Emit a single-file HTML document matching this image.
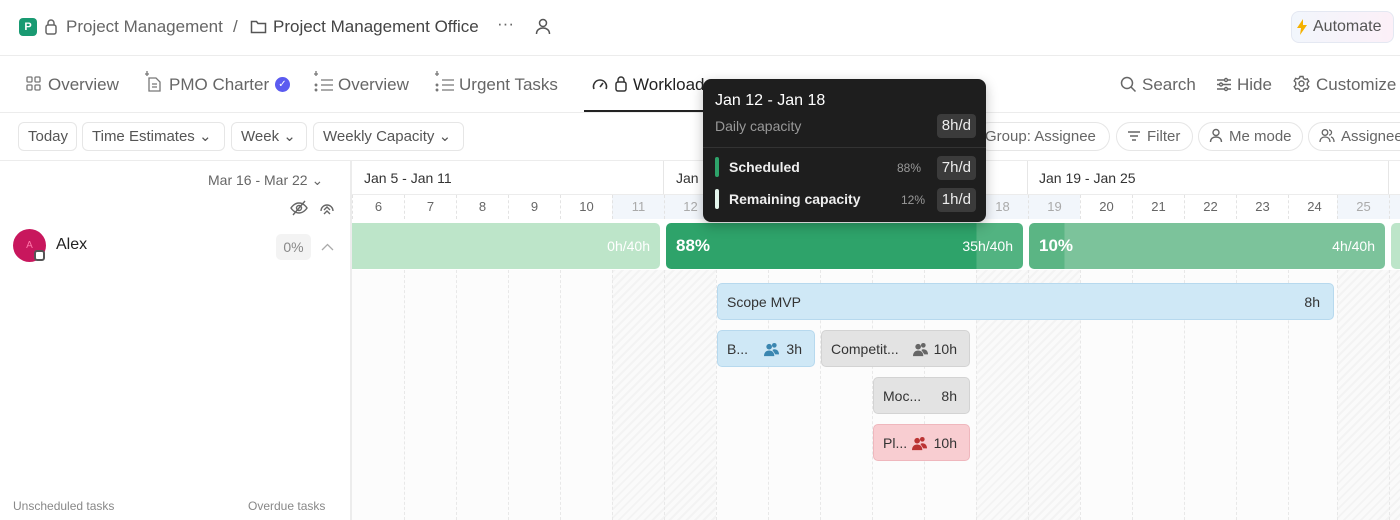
<!DOCTYPE html>
<html><head><meta charset="utf-8"><style>
*{box-sizing:border-box;margin:0;padding:0}
body{width:1400px;height:520px;overflow:hidden;background:#fff;font-family:"Liberation Sans",sans-serif;color:#333;position:relative}
.a{position:absolute;white-space:nowrap}
.g{color:#666}
.btn{position:absolute;top:122px;height:29px;border:1px solid #e6e6e6;border-radius:6px;font-size:15px;color:#555;padding:0 9px;line-height:27px}
.pill{position:absolute;top:122px;height:29px;border:1px solid #e6e6e6;border-radius:15px;font-size:15px;color:#666;padding:0 10px;line-height:27px}
.day{position:absolute;top:195px;height:24px;width:52px;text-align:center;font-size:13px;color:#666;line-height:24px;border-left:1px dashed #e3e3e3}
.we{background:#f2f6fb;color:#aaa}
.col{position:absolute;top:270px;bottom:0;width:52px;border-left:1px dashed #e8e8e8}
.hatch{background:repeating-linear-gradient(135deg,#f3f3f3 0 2px,#fafafa 2px 6px)}
.task{position:absolute;height:37px;border-radius:5px;font-size:14px;line-height:37px;padding:0 9px;color:#333}
.tk{display:inline-block;background:#3b3b3b;border-radius:4px;padding:0 5px;height:24px;line-height:24px;color:#eee;font-size:15px}
.ppl{position:absolute;top:11px}
</style></head><body>
<svg width="0" height="0" style="position:absolute"><defs><symbol id="pp" viewBox="0 0 16 16"><circle cx="5.5" cy="5" r="3"/><path d="M0 15c0-4 2.5-6 5.5-6s5.5 2 5.5 6z"/><circle cx="11" cy="3.5" r="2.5"/><path d="M9 8.5c1-.7 1.5-.8 2-.8 3 0 5 2 5 5.5h-4z"/></symbol></defs></svg>
<!-- top bar -->
<div class="a" style="left:19px;top:18px;width:18px;height:18px;background:#199a72;border-radius:4px;color:#fff;font-size:11px;font-weight:bold;text-align:center;line-height:18px">P</div>
<svg class="a" style="left:44px;top:18px" width="14" height="18" viewBox="0 0 14 18"><rect x="2" y="7" width="10" height="9" rx="2" fill="none" stroke="#666" stroke-width="1.5"/><path d="M4 7V5a3 3 0 0 1 6 0v2" fill="none" stroke="#666" stroke-width="1.5"/></svg>
<div class="a g" style="left:66px;top:17px;font-size:17px">Project Management</div>
<div class="a g" style="left:233px;top:17px;font-size:17px">/</div>
<svg class="a" style="left:250px;top:19px" width="17" height="15" viewBox="0 0 17 15"><path d="M1.5 2.5h5l1.5 2h7.5v9h-14z" fill="none" stroke="#555" stroke-width="1.5"/></svg>
<div class="a" style="left:273px;top:17px;font-size:17px;color:#444">Project Management Office</div>
<div class="a g" style="left:497px;top:14px;font-size:17px">···</div>
<svg class="a" style="left:535px;top:18px" width="16" height="17" viewBox="0 0 16 17"><circle cx="8" cy="5" r="3.5" fill="none" stroke="#555" stroke-width="1.5"/><path d="M1.5 16c0-4 3-6 6.5-6s6.5 2 6.5 6" fill="none" stroke="#555" stroke-width="1.5"/></svg>
<div class="a" style="left:1291px;top:11px;width:103px;height:32px;border:1px solid #e4e8f2;border-radius:8px;background:linear-gradient(90deg,#f2f6fc,#fcf0f8);font-size:16px;color:#555;line-height:30px;padding-left:21px">Automate</div>
<svg class="a" style="left:1297px;top:19px" width="10" height="16" viewBox="0 0 10 16"><path d="M6 0L0 9h4l-1 7 7-10H6z" fill="#f5b100"/></svg>
<div class="a" style="left:0;top:55px;width:1400px;height:1px;background:#ececec"></div>
<!-- tabs -->
<svg class="a" style="left:26px;top:76px" width="15" height="15" viewBox="0 0 15 15" fill="none" stroke="#777" stroke-width="1.3"><rect x="1" y="1" width="5" height="5" rx="1"/><rect x="9" y="1" width="5" height="5" rx="1"/><rect x="1" y="9" width="5" height="5" rx="1"/><rect x="9" y="9" width="5" height="5" rx="1"/></svg>
<div class="a g" style="left:48px;top:75px;font-size:17px">Overview</div>
<svg class="a" style="left:143px;top:70px" width="20" height="22" viewBox="0 0 20 22" fill="none" stroke="#777" stroke-width="1.3"><path d="M4 1v5M2 4h4" /><path d="M6 8h7l4 4v9H6z"/><path d="M9 14h5M9 17h5"/></svg>
<div class="a g" style="left:169px;top:75px;font-size:17px">PMO Charter</div>
<div class="a" style="left:275px;top:77px;width:15px;height:15px;border-radius:50%;background:#5b5bf0;color:#fff;font-size:10px;text-align:center;line-height:15px">✓</div>
<svg class="a" style="left:313px;top:70px" width="22" height="22" viewBox="0 0 22 22" fill="none" stroke="#777" stroke-width="1.3"><path d="M3 1v5M1 4h4"/><path d="M8 10h12M8 15h12M8 20h12"/><circle cx="3" cy="15" r=".8" fill="#777"/><circle cx="3" cy="20" r=".8" fill="#777"/></svg>
<div class="a g" style="left:338px;top:75px;font-size:17px">Overview</div>
<svg class="a" style="left:434px;top:70px" width="22" height="22" viewBox="0 0 22 22" fill="none" stroke="#777" stroke-width="1.3"><path d="M3 1v5M1 4h4"/><path d="M8 10h12M8 15h12M8 20h12"/><circle cx="3" cy="15" r=".8" fill="#777"/><circle cx="3" cy="20" r=".8" fill="#777"/></svg>
<div class="a g" style="left:459px;top:75px;font-size:17px">Urgent Tasks</div>
<svg class="a" style="left:592px;top:77px" width="16" height="14" viewBox="0 0 16 14"><path d="M2 12a6.5 6.5 0 1 1 12 0" fill="none" stroke="#333" stroke-width="1.6"/><path d="M8 10l3-4" stroke="#333" stroke-width="1.6"/></svg>
<svg class="a" style="left:614px;top:75px" width="14" height="18" viewBox="0 0 14 18"><rect x="2" y="7" width="10" height="9" rx="2" fill="none" stroke="#333" stroke-width="1.5"/><path d="M4 7V5a3 3 0 0 1 6 0v2" fill="none" stroke="#333" stroke-width="1.5"/></svg>
<div class="a" style="left:633px;top:75px;font-size:17px;color:#222">Workload</div>
<div class="a" style="left:584px;top:110px;width:124px;height:2px;background:#222"></div>
<svg class="a" style="left:1120px;top:76px" width="17" height="17" viewBox="0 0 17 17"><circle cx="7" cy="7" r="5.5" fill="none" stroke="#666" stroke-width="1.5"/><path d="M11 11l4.5 4.5" stroke="#666" stroke-width="1.5"/></svg>
<div class="a g" style="left:1142px;top:75px;font-size:17px">Search</div>
<svg class="a" style="left:1216px;top:77px" width="16" height="15" viewBox="0 0 16 15" fill="none" stroke="#666" stroke-width="1.4"><path d="M1 3h14M1 7.5h14M1 12h14"/><circle cx="10" cy="3" r="1.5" fill="#fff"/><circle cx="5" cy="7.5" r="1.5" fill="#fff"/><circle cx="10" cy="12" r="1.5" fill="#fff"/></svg>
<div class="a g" style="left:1237px;top:75px;font-size:17px">Hide</div>
<svg class="a" style="left:1293px;top:75px" width="17" height="17" viewBox="0 0 17 17" fill="none" stroke="#666" stroke-width="1.4"><circle cx="8.5" cy="8.5" r="2.5"/><path d="M7 1.5h3l.5 2 1.8 1 2-.7 1.5 2.6-1.5 1.4v2.4l1.5 1.4-1.5 2.6-2-.7-1.8 1-.5 2H7l-.5-2-1.8-1-2 .7-1.5-2.6 1.5-1.4V7.3L1.2 5.9l1.5-2.6 2 .7 1.8-1z"/></svg>
<div class="a g" style="left:1316px;top:75px;font-size:17px">Customize</div>
<div class="a" style="left:0;top:112px;width:1400px;height:1px;background:#ececec"></div>
<!-- toolbar -->
<div class="btn" style="left:18px;width:59px">Today</div>
<div class="btn" style="left:82px;width:143px">Time Estimates ⌄</div>
<div class="btn" style="left:231px;width:76px">Week ⌄</div>
<div class="btn" style="left:313px;width:151px">Weekly Capacity ⌄</div>
<div class="pill" style="left:975px;width:135px;border-left:none">Group: Assignee</div>
<div class="pill" style="left:1116px;width:77px;padding-left:30px">Filter</div>
<svg class="a" style="left:1127px;top:130px" width="14" height="12" viewBox="0 0 14 12" stroke="#666" stroke-width="1.4"><path d="M1 2h12M3 6h8M5 10h4"/></svg>
<div class="pill" style="left:1198px;width:105px;padding-left:30px">Me mode</div>
<svg class="a" style="left:1209px;top:128px" width="14" height="15" viewBox="0 0 14 15" fill="none" stroke="#666" stroke-width="1.4"><circle cx="7" cy="4.5" r="3"/><path d="M1.5 14c0-3.5 2.5-5 5.5-5s5.5 1.5 5.5 5"/></svg>
<div class="pill" style="left:1308px;width:120px;padding-left:32px">Assignee</div>
<svg class="a" style="left:1319px;top:128px" width="16" height="15" viewBox="0 0 16 15" fill="none" stroke="#666" stroke-width="1.3"><circle cx="6" cy="4.5" r="2.8"/><path d="M1 14c0-3.5 2.2-5 5-5s5 1.5 5 5"/><path d="M10 2a2.5 2.5 0 0 1 0 5M12 9c2 .5 3 2 3 5"/></svg>
<div class="a" style="left:0;top:160px;width:1400px;height:1px;background:#ececec"></div>
<!-- left panel -->
<div class="a g" style="left:208px;top:172px;font-size:14px">Mar 16 - Mar 22 ⌄</div>
<svg class="a" style="left:290px;top:200px" width="18" height="16" viewBox="0 0 18 16" fill="none" stroke="#666" stroke-width="1.4"><path d="M1 8s3-5 8-5 8 5 8 5-3 5-8 5-8-5-8-5z"/><circle cx="9" cy="8" r="2.5"/><path d="M3 15L15 1"/></svg>
<svg class="a" style="left:319px;top:199px" width="16" height="18" viewBox="0 0 16 18" fill="none" stroke="#666" stroke-width="1.4"><path d="M2 12a6 6 0 1 1 12 0"/><path d="M5 11l3-3 3 3M5 15l3-3 3 3"/></svg>
<div class="a" style="left:13px;top:229px;width:33px;height:33px;border-radius:50%;background:#c8175d;color:#f7a;font-size:10px;text-align:center;line-height:33px">A</div>
<div class="a" style="left:34px;top:250px;width:11px;height:11px;border-radius:3px;background:#fff;border:2px solid #555"></div>
<div class="a" style="left:56px;top:236px;font-size:16px;color:#222">Alex</div>
<div class="a" style="left:276px;top:234px;width:35px;height:26px;background:#f3f3f3;border-radius:5px;color:#888;font-size:14px;text-align:center;line-height:26px">0%</div>
<svg class="a" style="left:321px;top:243px" width="13" height="8" viewBox="0 0 13 8" fill="none" stroke="#aaa" stroke-width="1.3"><path d="M1 7l5.5-5.5L12 7"/></svg>
<div class="a" style="left:13px;top:499px;font-size:12px;color:#888">Unscheduled tasks</div>
<div class="a" style="left:248px;top:499px;font-size:12px;color:#888">Overdue tasks</div>
<div class="a" style="left:350px;top:160px;width:2px;height:360px;background:#ececec"></div>
<!-- grid -->
<div class="a" style="left:352px;top:270px;width:1048px;height:250px;background:#fcfcfc"></div>
<div class="col hatch" style="left:612px;width:104px"></div>
<div class="col hatch" style="left:976px;width:104px"></div>
<div class="col hatch" style="left:1337px;width:63px"></div>
<div class="col" style="left:404px"></div><div class="col" style="left:456px"></div><div class="col" style="left:508px"></div><div class="col" style="left:560px"></div><div class="col" style="left:664px"></div><div class="col" style="left:716px"></div><div class="col" style="left:768px"></div><div class="col" style="left:820px"></div><div class="col" style="left:872px"></div><div class="col" style="left:924px"></div><div class="col" style="left:1028px"></div><div class="col" style="left:1080px"></div><div class="col" style="left:1132px"></div><div class="col" style="left:1184px"></div><div class="col" style="left:1236px"></div><div class="col" style="left:1288px"></div><div class="col" style="left:1389px"></div>
<div class="a" style="left:352px;top:194px;width:1048px;height:1px;background:#ececec"></div>
<div class="a" style="left:663px;top:161px;width:1px;height:33px;background:#e6e6e6"></div>
<div class="a" style="left:1027px;top:161px;width:1px;height:33px;background:#e6e6e6"></div>
<div class="a" style="left:1388px;top:161px;width:1px;height:33px;background:#e6e6e6"></div>
<div class="a" style="left:364px;top:170px;font-size:14px;color:#333">Jan 5 - Jan 11</div>
<div class="a" style="left:676px;top:170px;font-size:14px;color:#333">Jan 12 - Jan 18</div>
<div class="a" style="left:1039px;top:170px;font-size:14px;color:#333">Jan 19 - Jan 25</div>
<div class="day" style="left:352px">6</div><div class="day" style="left:404px">7</div><div class="day" style="left:456px">8</div><div class="day" style="left:508px">9</div><div class="day" style="left:560px">10</div><div class="day we" style="left:612px">11</div><div class="day we" style="left:664px">12</div><div class="day" style="left:716px">13</div><div class="day" style="left:768px">14</div><div class="day" style="left:820px">15</div><div class="day" style="left:872px">16</div><div class="day" style="left:924px">17</div><div class="day we" style="left:976px">18</div><div class="day we" style="left:1028px">19</div><div class="day" style="left:1080px">20</div><div class="day" style="left:1132px">21</div><div class="day" style="left:1184px">22</div><div class="day" style="left:1236px">23</div><div class="day" style="left:1288px">24</div><div class="day we" style="left:1337px">25</div><div class="day we" style="left:1389px"></div>
<!-- capacity bars -->
<div class="a" style="left:352px;top:223px;width:308px;height:46px;background:#bde5c9;border-radius:0 5px 5px 0;color:#fff;font-size:14px;line-height:46px;text-align:right;padding-right:10px">0h/40h</div>
<div class="a" style="left:666px;top:223px;width:357px;height:46px;background:linear-gradient(90deg,#2ea36a 0 87%,#52b381 87%);border-radius:5px;color:#fff;line-height:46px"><span style="position:absolute;left:10px;font-size:17px;font-weight:bold">88%</span><span style="position:absolute;right:10px;font-size:14px">35h/40h</span></div>
<div class="a" style="left:1029px;top:223px;width:356px;height:46px;background:linear-gradient(90deg,#5bb584 0 10%,#7cc39b 10%);border-radius:5px;color:#fff;line-height:46px"><span style="position:absolute;left:10px;font-size:17px;font-weight:bold">10%</span><span style="position:absolute;right:10px;font-size:14px">4h/40h</span></div>
<div class="a" style="left:1391px;top:223px;width:20px;height:46px;background:#bde5c9;border-radius:5px"></div>
<!-- tasks -->
<div class="task" style="left:717px;top:283px;width:617px;background:#cfe8f6;border:1px solid #b7d9ee">Scope MVP<span style="position:absolute;right:13px">8h</span></div>
<div class="task" style="left:717px;top:330px;width:98px;background:#cfe8f6;border:1px solid #b7d9ee">B...<svg class="ppl" style="left:46px;fill:#3a86b0" width="15" height="15"><use href="#pp"/></svg><span style="position:absolute;right:12px">3h</span></div>
<div class="task" style="left:821px;top:330px;width:149px;background:#e3e3e3;border:1px solid #d3d3d3">Competit...<svg class="ppl" style="left:91px;fill:#666" width="15" height="15"><use href="#pp"/></svg><span style="position:absolute;right:12px">10h</span></div>
<div class="task" style="left:873px;top:377px;width:97px;background:#e3e3e3;border:1px solid #d3d3d3">Moc...<span style="position:absolute;right:12px">8h</span></div>
<div class="task" style="left:873px;top:424px;width:97px;background:#f8cdd1;border:1px solid #efb7bd">Pl...<svg class="ppl" style="left:38px;fill:#b33" width="15" height="15"><use href="#pp"/></svg><span style="position:absolute;right:12px">10h</span></div>
<!-- tooltip -->
<div class="a" style="left:703px;top:79px;width:283px;height:143px;background:#1e1e1e;border-radius:8px;box-shadow:0 4px 12px rgba(0,0,0,.25)">
 <div class="a" style="left:12px;top:13px;font-size:16px;color:#fff">Jan 12 - Jan 18</div>
 <div class="a" style="left:12px;top:39px;font-size:14px;color:#999">Daily capacity</div>
 <div class="a" style="right:10px;top:35px"><span class="tk">8h/d</span></div>
 <div class="a" style="left:0;top:68px;width:283px;height:1px;background:#333"></div>
 <div class="a" style="left:12px;top:78px;width:4px;height:20px;background:#2ea36a;border-radius:2px"></div>
 <div class="a" style="left:26px;top:80px;font-size:14px;color:#eee;font-weight:bold">Scheduled</div>
 <div class="a" style="left:194px;top:82px;font-size:12px;color:#999">88%</div>
 <div class="a" style="right:10px;top:77px"><span class="tk">7h/d</span></div>
 <div class="a" style="left:12px;top:110px;width:4px;height:20px;background:#e6f7ee;border-radius:2px"></div>
 <div class="a" style="left:26px;top:112px;font-size:14px;color:#eee;font-weight:bold">Remaining capacity</div>
 <div class="a" style="left:198px;top:114px;font-size:12px;color:#999">12%</div>
 <div class="a" style="right:10px;top:109px"><span class="tk">1h/d</span></div>
</div>
</body></html>
